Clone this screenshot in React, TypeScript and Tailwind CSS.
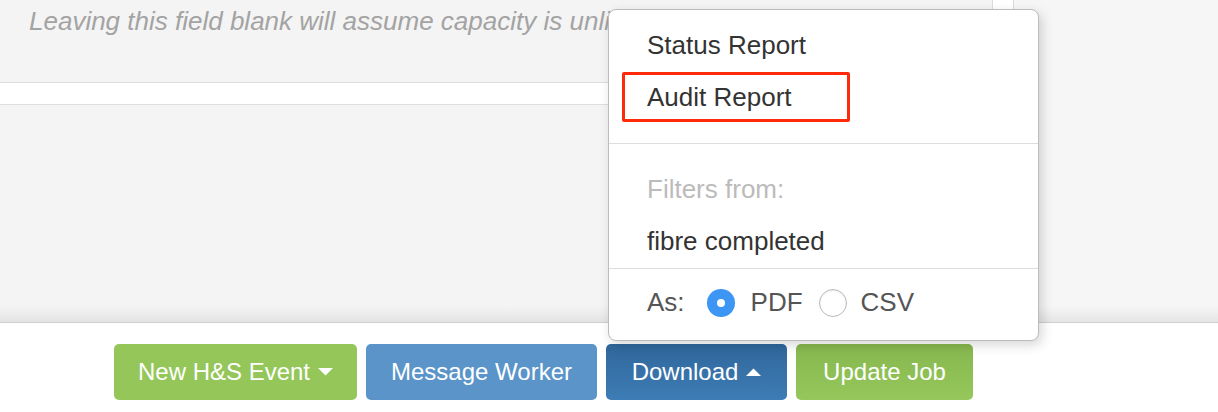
import React from "react";

const font = "font-['Liberation_Sans',Arial,Helvetica,sans-serif]";

function CaretDown() {
  return (
    <svg width="15" height="8" viewBox="0 0 15 8" className="ml-[8px]">
      <path d="M0 0 L15 0 L7.5 7.5 Z" fill="white" />
    </svg>
  );
}

function CaretUp() {
  return (
    <svg width="15" height="8" viewBox="0 0 15 8" className="ml-[8px]">
      <path d="M0 8 L15 8 L7.5 0.5 Z" fill="white" />
    </svg>
  );
}

export default function App() {
  return (
    <div className={`relative w-[1218px] h-[412px] overflow-hidden bg-white ${font}`}>
      <div className="flex flex-col h-full">
        {/* upper area */}
        <div className="relative flex h-[322px]">
          <div className="w-[993px] flex flex-col bg-[#f4f4f4] border-r border-[#dcdcdc]">
            <div className="h-[82px] pl-[29px] pt-[6px] overflow-hidden">
              <p className="italic text-[26px] leading-[31px] text-[#a3a3a3] whitespace-nowrap">
                Leaving this field blank will assume capacity is unlimited
              </p>
            </div>
            <div className="h-[23px] bg-white border-y border-[#dedede]" />
            <div className="flex-1" />
          </div>
          <div className="w-[21px] bg-white border-r border-[#dcdcdc]" />
          <div className="flex-1 bg-[#f6f6f6]" />
          <div className="absolute left-0 right-0 bottom-0 h-[16px] bg-gradient-to-b from-transparent to-[rgba(0,0,0,0.07)]" />
        </div>

        {/* footer */}
        <div className="flex-1 bg-white border-t border-[#cfcfcf] pl-[114px] pt-[21px]">
          <div className="flex gap-[9px]">
            <button className="w-[243px] h-[56px] rounded-[5px] bg-[#94c65a] text-white text-[24px] flex items-center justify-center">
              New H&amp;S Event
              <CaretDown />
            </button>
            <button className="w-[231px] h-[56px] rounded-[5px] bg-[#5a94c9] text-white text-[24px] flex items-center justify-center">
              Message Worker
            </button>
            <button className="w-[181px] h-[56px] rounded-[5px] bg-gradient-to-b from-[#30679b] to-[#3d7cb5] text-white text-[24px] flex items-center justify-center">
              Download
              <CaretUp />
            </button>
            <button className="w-[177px] h-[56px] rounded-[5px] bg-gradient-to-b from-[#86b74f] to-[#95c75b] text-white text-[24px] flex items-center justify-center">
              Update Job
            </button>
          </div>
        </div>
      </div>

      {/* dropdown menu */}
      <div className="absolute left-[608px] top-[9px] w-[431px] h-[332px] bg-white rounded-[8px] border border-[#bcbcbc] shadow-[3px_4px_12px_rgba(0,0,0,0.16)] flex flex-col">
        <div className="pt-[9px]">
          <div className="h-[52px] pl-[38px] flex items-center text-[26px] text-[#333]">Status Report</div>
          <div className="relative h-[52px] pl-[38px] flex items-center text-[26px] text-[#333]">
            Audit Report
            <div className="absolute left-[13px] top-[1px] w-[228px] h-[50px] border-[3px] border-[#ff2a0a] rounded-[2px]" />
          </div>
        </div>
        <div className="mt-[20px] border-t border-[#dddddd]" />
        <div className="pt-[19px]">
          <div className="h-[52px] pl-[38px] flex items-center text-[26px] text-[#bbbbbb]">Filters from:</div>
          <div className="h-[52px] pl-[38px] flex items-center text-[26px] text-[#333]">fibre completed</div>
        </div>
        <div className="mt-[1px] border-t border-[#dddddd]" />
        <div className="flex-1 pl-[38px] pb-[4px] flex items-center text-[26px] text-[#555]">
          <span>As:</span>
          <span className="ml-[22px] w-[28px] h-[28px] rounded-full bg-[#3d95f4] flex items-center justify-center">
            <span className="w-[8px] h-[8px] rounded-full bg-white" />
          </span>
          <span className="ml-[16px]">PDF</span>
          <span className="ml-[16px] w-[28px] h-[28px] rounded-full bg-white border border-[#b9b9b9] shadow-[inset_0_1px_2px_rgba(0,0,0,0.08)]" />
          <span className="ml-[14px]">CSV</span>
        </div>
      </div>
    </div>
  );
}
